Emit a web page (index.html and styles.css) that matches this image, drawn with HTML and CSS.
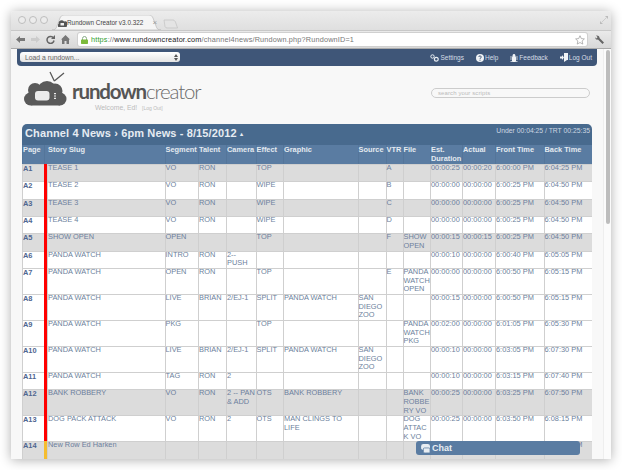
FILE: index.html
```html
<!doctype html>
<html lang="en">

<head>
  <meta charset="utf-8">
  <title>Rundown Creator v3.0.322</title>
  <link rel="stylesheet" href="styles.css">
</head>

<body>
  <div class="window">
    <div class="tabstrip">
      <div class="lights"><i></i><i></i><i></i></div>
      <div class="tab">
        <svg class="tab-shape" width="111" height="15" viewBox="0 0 111 15"><path d="M0 15c3 0 4-1 5-4l3-8c1-2 2-3 4-3h85c2 0 3 1 4 3l3 8c1 3 2 4 5 4z" fill="#f5f5f5" stroke="#bbb" stroke-width=".7"/></svg>
        <svg class="favicon" width="9" height="8" viewBox="0 0 9 8"><path d="M1 8a1.500 1.500 0 0 1-.3-3A3 3 0 0 1 6 2.500 2.500 2.500 0 0 1 8 8z" fill="#555"/><rect x="2.500" y="4" width="3.500" height="2.500" fill="#eee"/></svg>
        <span class="tab-title">Rundown Creator v3.0.322</span>
        <span class="tab-close">×</span>
      </div>
      <svg class="newtab" width="15" height="10" viewBox="0 0 15 10"><path d="M1 1h9c1 0 2 1 2.500 2l2 6H4c-1 0-1.500-.5-2-1.500z" fill="#e4e4e4" stroke="#c2c2c2" stroke-width=".7"/></svg>
      <svg class="resize" width="8" height="8" viewBox="0 0 8 8"><path d="M0 8V5l3 3zM8 0v3L5 0z" fill="#bbb"/><path d="M2 6l4-4" stroke="#ccc"/></svg>
    </div>

    <div class="toolbar">
      <svg class="tool" width="9" height="9" viewBox="0 0 9 9"><path d="M0 4.500L4 1v2h5v3H4v2z" fill="#777"/></svg>
      <svg class="tool" width="9" height="9" viewBox="0 0 9 9"><path d="M9 4.500L5 1v2H0v3h5v2z" fill="#ccc"/></svg>
      <svg class="tool" width="9" height="9" viewBox="0 0 9 9"><path d="M7.500 3A3.500 3.500 0 1 0 8 5.500" fill="none" stroke="#666" stroke-width="1.500"/><path d="M9 0v4H5z" fill="#666"/></svg>
      <svg class="tool" width="9" height="9" viewBox="0 0 9 9"><path d="M4.500 0L9 4.500H8V9H5.500V6h-2v3H1V4.500H0z" fill="#777"/></svg>
      <div class="omnibox">
        <svg class="lock" width="7" height="8" viewBox="0 0 7 8"><path d="M1.500 4V2.500a2 2 0 0 1 4 0V4" fill="none" stroke="#8a8" stroke-width="1"/><rect x="0" y="3.500" width="7" height="4.500" rx=".7" fill="#7dbb3c"/></svg>
        <span class="url"><span class="scheme">https</span><span class="url-dim">://</span><span class="domain">www.rundowncreator.com</span><span class="url-dim">/channel4news/Rundown.php?RundownID=1</span></span>
        <svg class="star" width="10" height="10" viewBox="0 0 10 10"><path d="M5 .7l1.300 2.900 3.100.3-2.300 2.100.7 3.100L5 7.500 2.200 9.100l.7-3.100L.6 3.900l3.100-.3z" fill="#fff" stroke="#999" stroke-width=".7"/></svg>
      </div>
      <svg class="wrench" width="9" height="9" viewBox="0 0 9 9"><path d="M1 .5l1.500 1.500-.5 1-1 .5L0 2c0 2 1.500 3 3 2.500L7.500 9 9 7.500 4.500 3C5 1.500 3 0 1 .5z" fill="#666"/></svg>
    </div>

    <div class="viewport">
      <div class="page">
        <div class="navbar">
          <div class="loader">
            <span>Load a rundown...</span>
            <svg width="4" height="7" viewBox="0 0 4 7"><path d="M2 0l2 3H0zM2 7L0 4h4z" fill="#555"/></svg>
          </div>
          <ul class="navlinks">
            <li>
              <svg width="9" height="8" viewBox="0 0 9 8"><circle cx="2.500" cy="2.500" r="1.700" fill="none" stroke="#e8edf2"/><circle cx="6.300" cy="5.300" r="1.900" fill="none" stroke="#e8edf2" stroke-width="1.200"/></svg>
              Settings
            </li>
            <li>
              <svg width="8" height="8" viewBox="0 0 8 8"><circle cx="4" cy="4" r="4" fill="#f0f3f6"/><path d="M2.800 3a1.200 1.200 0 1 1 1.600 1.200c-.4.200-.4.400-.4.800" fill="none" stroke="#3f5678"/><rect x="3.500" y="5.700" width="1" height="1" fill="#3f5678"/></svg>
              Help
            </li>
            <li>
              <svg width="8" height="8" viewBox="0 0 8 8"><rect x="2" y="2" width="4" height="6" rx="1.500" fill="#f0f3f6"/><circle cx="4" cy="1.300" r="1.300" fill="#f0f3f6"/><path d="M0 3h8M0 5h8M.5 7.500h7" stroke="#f0f3f6" stroke-width=".7"/></svg>
              Feedback
            </li>
            <li>
              <svg width="8" height="9" viewBox="0 0 8 9"><path d="M4 0h4v7H7L4 9zM0 3.500h2V2l2 2.500L2 7V5.500H0z" fill="#f0f3f6"/></svg>
              Log Out
            </li>
          </ul>
        </div>

        <header class="masthead">
          <div class="brand">
            <svg class="brand-icon" width="43" height="35" viewBox="0 0 43 35">
              <path d="M26 1l4.300 9M40 2l-9.700 8" stroke="#5a5a5a" stroke-width="1.300"/>
              <g fill="#5a5a5a">
                <circle cx="6.500" cy="28" r="6.500"/>
                <circle cx="11" cy="19" r="7"/>
                <circle cx="23" cy="19.500" r="9.500"/>
                <circle cx="31" cy="20" r="7.500"/>
                <circle cx="36" cy="28" r="6.500"/>
                <rect x="7" y="22" width="29" height="12.500"/>
              </g>
              <rect x="11" y="20" width="14.500" height="9.500" rx="3" fill="#ececec"/>
              <path d="M31 22v7" stroke="#ececec" stroke-width="2" stroke-dasharray="1.200 1.200"/>
            </svg>
            <div class="brand-text">
              <div class="wordmark"><b>rundown</b>creator</div>
              <div class="welcome">Welcome, Ed! <small>[Log Out]</small></div>
            </div>
          </div>
          <div class="search">search your scripts</div>
        </header>

        <div class="rundown-title">
          <h1>Channel 4 News › 6pm News - 8/15/2012 <span class="caret">▴</span></h1>
          <span class="trt">Under 00:04:25 / TRT 00:25:35</span>
        </div>

        <table class="rundown">
          <colgroup>
            <col class="c-page"><col class="c-slug"><col class="c-seg"><col class="c-talent"><col class="c-cam"><col class="c-effect"><col class="c-graphic"><col class="c-source"><col class="c-vtr"><col class="c-file"><col class="c-est"><col class="c-actual"><col class="c-time"><col class="c-time">
          </colgroup>
          <thead>
            <tr><th>Page</th><th class="slug-head">Story Slug</th><th>Segment</th><th>Talent</th><th>Camera</th><th>Effect</th><th>Graphic</th><th>Source</th><th>VTR</th><th>File</th><th>Est. Duration</th><th>Actual</th><th>Front Time</th><th>Back Time</th></tr>
          </thead>
          <tbody>
            <tr class="grey"><td class="pg">A1</td><td class="slug">TEASE 1</td><td>VO</td><td>RON</td><td></td><td>TOP</td><td></td><td></td><td>A</td><td></td><td>00:00:25</td><td>00:00:20</td><td>6:00:00 PM</td><td>6:04:25 PM</td></tr>
            <tr><td class="pg">A2</td><td class="slug">TEASE 2</td><td>VO</td><td>RON</td><td></td><td>WIPE</td><td></td><td></td><td>B</td><td></td><td>00:00:00</td><td>00:00:00</td><td>6:00:25 PM</td><td>6:04:50 PM</td></tr>
            <tr class="grey"><td class="pg">A3</td><td class="slug">TEASE 3</td><td>VO</td><td>RON</td><td></td><td>WIPE</td><td></td><td></td><td>C</td><td></td><td>00:00:00</td><td>00:00:00</td><td>6:00:25 PM</td><td>6:04:50 PM</td></tr>
            <tr><td class="pg">A4</td><td class="slug">TEASE 4</td><td>VO</td><td>RON</td><td></td><td>WIPE</td><td></td><td></td><td>D</td><td></td><td>00:00:00</td><td>00:00:00</td><td>6:00:25 PM</td><td>6:04:50 PM</td></tr>
            <tr class="grey"><td class="pg">A5</td><td class="slug">SHOW OPEN</td><td>OPEN</td><td></td><td></td><td>TOP</td><td></td><td></td><td>F</td><td>SHOW OPEN</td><td>00:00:15</td><td>00:00:15</td><td>6:00:25 PM</td><td>6:04:50 PM</td></tr>
            <tr><td class="pg">A6</td><td class="slug">PANDA WATCH</td><td>INTRO</td><td>RON</td><td>2--<br>PUSH</td><td></td><td></td><td></td><td></td><td></td><td>00:00:10</td><td>00:00:00</td><td>6:00:40 PM</td><td>6:05:05 PM</td></tr>
            <tr><td class="pg">A7</td><td class="slug">PANDA WATCH</td><td>OPEN</td><td>RON</td><td></td><td>TOP</td><td></td><td></td><td>E</td><td>PANDA WATCH OPEN</td><td>00:00:00</td><td>00:00:00</td><td>6:00:50 PM</td><td>6:05:15 PM</td></tr>
            <tr><td class="pg">A8</td><td class="slug">PANDA WATCH</td><td>LIVE</td><td>BRIAN</td><td>2/EJ-1</td><td>SPLIT</td><td>PANDA WATCH</td><td>SAN DIEGO ZOO</td><td></td><td></td><td>00:00:15</td><td>00:00:00</td><td>6:00:50 PM</td><td>6:05:15 PM</td></tr>
            <tr><td class="pg">A9</td><td class="slug">PANDA WATCH</td><td>PKG</td><td></td><td></td><td>TOP</td><td></td><td></td><td></td><td>PANDA WATCH PKG</td><td>00:02:00</td><td>00:00:00</td><td>6:01:05 PM</td><td>6:05:30 PM</td></tr>
            <tr><td class="pg">A10</td><td class="slug">PANDA WATCH</td><td>LIVE</td><td>BRIAN</td><td>2/EJ-1</td><td>SPLIT</td><td>PANDA WATCH</td><td>SAN DIEGO ZOO</td><td></td><td></td><td>00:00:10</td><td>00:00:00</td><td>6:03:05 PM</td><td>6:07:30 PM</td></tr>
            <tr><td class="pg">A11</td><td class="slug">PANDA WATCH</td><td>TAG</td><td>RON</td><td>2</td><td></td><td></td><td></td><td></td><td></td><td>00:00:10</td><td>00:00:00</td><td>6:03:15 PM</td><td>6:07:40 PM</td></tr>
            <tr class="grey"><td class="pg">A12</td><td class="slug">BANK ROBBERY</td><td>VO</td><td>RON</td><td>2 -- PAN &amp; ADD</td><td>OTS</td><td>BANK ROBBERY</td><td></td><td></td><td>BANK ROBBE<wbr>RY VO</td><td>00:00:25</td><td>00:00:00</td><td>6:03:25 PM</td><td>6:07:50 PM</td></tr>
            <tr><td class="pg">A13</td><td class="slug">DOG PACK ATTACK</td><td>VO</td><td>RON</td><td>2</td><td>OTS</td><td>MAN CLINGS TO LIFE</td><td></td><td></td><td>DOG ATTAC<wbr>K VO</td><td>00:00:25</td><td>00:00:00</td><td>6:03:50 PM</td><td>6:08:15 PM</td></tr>
            <tr class="grey"><td class="pg">A14</td><td class="slug new">New Row Ed Harken</td><td></td><td></td><td></td><td></td><td></td><td></td><td></td><td></td><td></td><td></td><td></td><td>6:08:15 PM</td></tr>
            <tr><td class="pg"></td><td class="slug new"></td><td></td><td></td><td></td><td></td><td></td><td></td><td></td><td></td><td></td><td></td><td></td><td></td></tr>
          </tbody>
        </table>
      </div>
      <div class="scrollbar"><div class="thumb"></div></div>
    </div>

    <div class="chat">
      <svg width="10" height="9" viewBox="0 0 9 8"><path d="M3 0h4a2 2 0 0 1 2 2v3H4a2 2 0 0 1-3-1V2a2 2 0 0 1 2-2z" fill="#e8edf2"/><path d="M4 3.500h4a1 1 0 0 1 1 1V8H5a1.500 1.500 0 0 1-2-1.500v-2a1 1 0 0 1 1-1z" fill="#e8edf2" stroke="#5a7ca0" stroke-width=".7"/></svg>
      Chat
    </div>
  </div>
</body>

</html>
```

FILE: styles.css
```css
html, body { margin:0; height:100%; overflow:hidden; background:#fff; }
body { font-family:"Liberation Sans",Arial,sans-serif; }
* { box-sizing:border-box; }

.window { position:relative; width:600px; height:448px; margin:11px; overflow:hidden; display:flex; flex-direction:column; border-radius:3px 3px 0 0; box-shadow:0 1px 12px rgba(0,0,0,.32); background:#f8f8f8; }

/* browser chrome */
.tabstrip { height:19px; flex:none; display:flex; align-items:flex-end; padding-left:7px; background:linear-gradient(#ececec,#dfdfdf); }
.lights { display:flex; gap:3px; align-self:center; margin:-1px 0 0; }
.lights i { display:block; width:8px; height:8px; border-radius:50%; background:#ececec; border:1px solid #bdbdbd; }
.tab { position:relative; flex:none; width:111px; height:15px; margin-left:4px; display:flex; align-items:center; padding-left:6px; font-size:6.400px; color:#444; }
.tab-shape { position:absolute; left:0; top:0; }
.favicon, .tab-title, .tab-close { position:relative; }
.favicon { flex:none; }
.tab-title { white-space:nowrap; }
.tab-close { margin-left:9px; color:#999; font-size:8px; }
.newtab { margin:0 0 1px 0; }
.resize { margin:0 3px 6px auto; }

.toolbar { height:19px; flex:none; display:flex; align-items:center; padding:0 5px; gap:5px; background:linear-gradient(#eaeaea,#d8d8d8); border-top:1px solid #c8c8c8; border-bottom:1px solid #aaa; }
.tool { flex:none; margin-right:1px; }
.omnibox { flex:1; height:13px; display:flex; align-items:center; margin-left:2px; padding:0 2px 0 3px; background:#fff; border-radius:2px; box-shadow:0 0 0 1px #d0d0d0; font-size:7.300px; }
.lock { flex:none; margin-right:3px; }
.url { white-space:nowrap; letter-spacing:.17px; }
.scheme { color:#2f9e2f; }
.url-dim { color:#777; }
.domain { color:#222; }
.star { margin-left:auto; }
.wrench { flex:none; margin:0 2px 0 3px; }

/* page */
.viewport { flex:1; display:flex; min-height:0; overflow:hidden; }
.page { flex:1; min-width:0; }
.scrollbar { flex:none; width:8px; padding:1px 1px 0 2px; background:#fbfbfb; border-left:1px solid #eee; }
.thumb { height:174px; background:#bdbdbd; border-radius:3px; }

.navbar { height:17px; margin:0 6px; padding:0 5px 0 3px; display:flex; align-items:center; justify-content:space-between; background:#3f5678; border-radius:0 0 4px 4px; font-size:6.800px; }
.loader { width:160px; height:10px; margin-top:-1px; padding:0 2px 0 5px; display:flex; align-items:center; justify-content:space-between; background:linear-gradient(#fff,#e4e4e4); border-radius:3px; color:#666; }
.navlinks { list-style:none; margin:0; padding:0; display:flex; gap:12px; font-size:6.500px; color:#d5dde6; }
.navlinks li { display:flex; align-items:center; gap:1px; white-space:nowrap; }

.masthead { height:58px; padding:0 13px; display:flex; justify-content:space-between; }
.brand { display:flex; align-items:flex-start; gap:5px; margin-top:5px; }
.brand-text { margin-top:9px; }
.wordmark { font-family:Lato,sans-serif; font-size:20.500px; line-height:22px; font-weight:300; color:#6a6a6a; letter-spacing:-1.150px; white-space:nowrap; }
.wordmark b { font-weight:700; color:#555; }
.welcome { margin-top:2px; padding-left:23px; font-size:6.800px; color:#bbb; white-space:nowrap; }
.welcome small { margin-left:3px; font-size:5px; }
.search { width:159px; height:10px; margin:22px 0 0; padding-left:6px; border:1px solid #ccc; border-radius:5px; font-size:6px; line-height:8px; letter-spacing:.1px; color:#bbb; }

.rundown-title { width:570px; height:21px; margin-left:11px; padding:0 2px 0 3px; display:flex; justify-content:space-between; background:#486a8e; border-radius:5px 5px 0 0; color:#e6ecf2; }
.rundown-title h1 { margin:0; font-size:11px; line-height:19px; letter-spacing:.12px; white-space:nowrap; }
.caret { font-size:6px; vertical-align:1px; }
.trt { font-size:6.800px; line-height:13px; color:#cdd7e2; }

.rundown { width:570px; margin-left:11px; table-layout:fixed; border-collapse:separate; border-spacing:0; font-size:7.400px; line-height:8.670px; color:#6c7f9c; }
.c-page { width:22px; }
.c-slug { width:120.500px; }
.c-seg { width:33.500px; }
.c-talent { width:28px; }
.c-cam { width:29.500px; }
.c-effect { width:27.500px; }
.c-graphic { width:74.500px; }
.c-source { width:28px; }
.c-vtr { width:17px; }
.c-file { width:27.500px; }
.c-est { width:32px; }
.c-actual { width:33px; }
.c-time { width:48.500px; }

.rundown th { height:19px; padding:1px 0 0 1px; text-align:left; vertical-align:top; font-size:7.400px; color:#e4eaf0; background:#5a7ca2; box-shadow:inset 1px 0 0 #54759a; }
.rundown th.slug-head { padding-left:4px; }
.rundown tbody tr { height:17.330px; background:#fff; }
.rundown tbody tr.grey { background:#dcdcdc; }
.rundown td { padding:0 0 0 1px; vertical-align:top; box-shadow:inset 1px 1px 0 #cfcfcf; }
.rundown td.pg { padding-top:1px; font-weight:bold; color:#4f6690; }
.rundown td.slug { border-left:3px solid #f00; }
.rundown td.slug.new { border-left-color:#f5bd2f; }

.chat { position:absolute; left:405px; top:430px; width:164px; height:14px; display:flex; align-items:center; gap:2px; padding-left:4px; background:#5a7ca2; border-radius:3px; font-size:9px; font-weight:bold; color:#e8edf2; }
```
